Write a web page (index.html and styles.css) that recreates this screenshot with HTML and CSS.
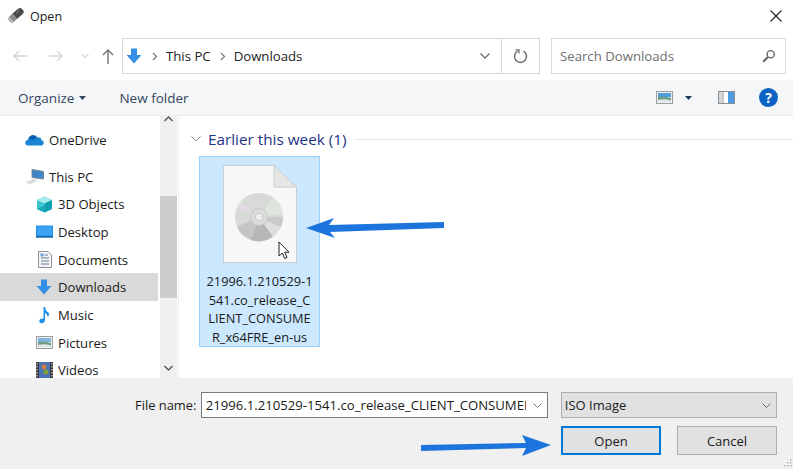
FILE: index.html
```html
<!DOCTYPE html>
<html lang="en">
<head>
<meta charset="utf-8">
<title>Open</title>
<link rel="stylesheet" href="styles.css">
</head>
<body>
<div class="dialog">
  <header class="titlebar">
    <div class="title-left">
      <svg class="app-icon" width="18" height="18" viewBox="0 0 18 18"><path d="M5.5 6.5 L11.5 1.5 Q13.5 0.5 15 2 L16.3 3.5 Q17.5 5 16 6.8 L10 12 Z" fill="#4a4a4a"/><path d="M5.5 6.5 L10 12 L6.5 15 L2 10 Z" fill="#8a8a8a"/><path d="M2 10 L6.5 15 L4.6 16.6 L0.5 12 Z" fill="#b5b5b5"/><path d="M9 6.5 L12 3.8" stroke="#8a8a8a" stroke-width="1"/></svg>
      <span>Open</span>
    </div>
    <svg class="close" width="14" height="14" viewBox="0 0 14 14"><path d="M1.5 1.5 L12.5 12.5 M12.5 1.5 L1.5 12.5" stroke="#222" stroke-width="1.1"/></svg>
  </header>

  <nav class="navbar">
    <div class="nav-buttons">
      <svg width="14" height="12" viewBox="0 0 14 12"><path d="M1 6 H14 M6 1 L1 6 L6 11" fill="none" stroke="#d6d6d6" stroke-width="1.4"/></svg>
      <svg width="14" height="12" viewBox="0 0 14 12"><path d="M0 6 H13 M8 1 L13 6 L8 11" fill="none" stroke="#d6d6d6" stroke-width="1.4"/></svg>
      <svg width="8" height="6" viewBox="0 0 8 6"><path d="M0.5 1 L4 4.5 L7.5 1" fill="none" stroke="#d6d6d6" stroke-width="1.2"/></svg>
      <svg width="12" height="15" viewBox="0 0 12 15"><path d="M6 15 V1 M1 6 L6 1 L11 6" fill="none" stroke="#757575" stroke-width="1.4"/></svg>
    </div>
    <div class="address">
      <svg class="addr-arrow" width="16" height="16" viewBox="0 0 16 16"><path d="M5 0.5 H11 V7 H15.5 L8 15.5 L0.5 7 H5 Z" fill="#3390e4"/></svg>
      <svg class="crumb-sep" width="6" height="9" viewBox="0 0 6 9"><path d="M1 1 L4.5 4.5 L1 8" fill="none" stroke="#777" stroke-width="1.2"/></svg>
      <span class="crumb">This PC</span>
      <svg class="crumb-sep" width="6" height="9" viewBox="0 0 6 9"><path d="M1 1 L4.5 4.5 L1 8" fill="none" stroke="#777" stroke-width="1.2"/></svg>
      <span class="crumb">Downloads</span>
      <svg class="addr-chevron" width="10" height="6" viewBox="0 0 10 6"><path d="M0.5 0.5 L5 5 L9.5 0.5" fill="none" stroke="#6d6d6d" stroke-width="1.3"/></svg>
      <div class="refresh">
        <svg width="15" height="15" viewBox="0 0 15 15"><path d="M4.5 2.2 A6 6 0 1 0 10.5 2.2" fill="none" stroke="#6e6e6e" stroke-width="1.5"/><path d="M2.5 0.8 H6 V4.4" fill="none" stroke="#6e6e6e" stroke-width="1.3"/></svg>
      </div>
    </div>
    <div class="search">
      <span>Search Downloads</span>
      <svg width="14" height="14" viewBox="0 0 14 14"><circle cx="8.7" cy="5.2" r="3.6" fill="none" stroke="#666" stroke-width="1.4"/><path d="M6 8 L1.2 12.8" stroke="#666" stroke-width="2"/></svg>
    </div>
  </nav>

  <div class="toolbar">
    <span class="tool">Organize<svg class="caret" width="7" height="4" viewBox="0 0 7 4"><path d="M0 0 H7 L3.5 4 Z" fill="#33475f"/></svg></span>
    <span class="tool new-folder">New folder</span>
    <div class="tool-icons">
      <svg width="17" height="13" viewBox="0 0 17 13"><rect x="0.5" y="0.5" width="16" height="12" fill="#eef0f2" stroke="#9a9d9f"/><rect x="2" y="2" width="13" height="4" fill="#4f9fd8"/><path d="M2 6 Q8 4.5 15 7 V11 H2 Z" fill="#6f9c84"/><path d="M2 9 Q8 7.5 15 9.5 V11 H2 Z" fill="#dfe8e6"/></svg>
      <svg class="view-caret" width="7" height="4" viewBox="0 0 7 4"><path d="M0 0 H7 L3.5 4 Z" fill="#1b3a63"/></svg>
      <svg class="pane" width="17" height="13" viewBox="0 0 17 13"><rect x="0.5" y="0.5" width="16" height="12" fill="#fff" stroke="#8a8f94"/><rect x="10" y="1" width="6" height="11" fill="#4a9be0"/><rect x="1" y="1" width="3" height="11" fill="#d6d8da"/><path d="M5 1 V12" stroke="#8a8f94"/></svg>
      <span class="help">?</span>
    </div>
  </div>

  <main class="content">
    <aside class="sidebar">
      <ul class="tree">
        <li class="tree-item level0 onedrive"><svg width="19" height="12" viewBox="0 0 19 12"><path d="M2.5 11.5 Q0 11 0.3 8.3 Q0.7 6 3.2 5.8 Q4.2 1.5 8 1.3 Q10.6 1.2 12.2 3.4 Q16 3 16.6 6.2 Q19 6.8 18.7 9.5 Q18.3 11.5 16.5 11.5 Z" fill="#1b86d6"/><path d="M3.2 5.8 Q4.2 1.5 8 1.3 Q10.6 1.2 12.2 3.4 Q10 4 9 6 Q6 4.5 3.2 5.8 Z" fill="#0a5fb0"/></svg><span>OneDrive</span></li>
        <li class="tree-item level0 thispc"><svg width="20" height="16" viewBox="0 0 20 16"><path d="M7 0.5 L18.5 2.5 V10 L7 8.5 Z" fill="#3d87c9" stroke="#71818f" stroke-width="0.9"/><path d="M0.5 13.5 L8 10 L13 11.5 L5 15.5 Z" fill="#d9dbdd"/></svg><span>This PC</span></li>
        <li class="tree-item level1"><svg width="17" height="17" viewBox="0 0 17 17"><path d="M8.5 0.5 L16 4 V13 L8.5 16.5 L1 13 V4 Z" fill="#3fc3cf"/><path d="M8.5 0.5 L16 4 L8.5 7.5 L1 4 Z" fill="#a6ecef"/><path d="M8.5 7.5 L16 4 V13 L8.5 16.5 Z" fill="#109fb2"/><path d="M1 13 L8.5 9.5 L8.5 16.5 Z" fill="#1aa9ba"/></svg><span>3D Objects</span></li>
        <li class="tree-item level1"><svg width="17" height="13" viewBox="0 0 17 13"><rect width="17" height="12" y="0.5" fill="#1f8fe8"/><rect x="1" y="1.5" width="15" height="9" fill="#3aa4f2"/><rect y="11" width="17" height="1.5" fill="#17659f"/></svg><span>Desktop</span></li>
        <li class="tree-item level1 docs"><svg width="14" height="17" viewBox="0 0 14 17"><path d="M0.5 0.5 H10 L13.5 4 V16.5 H0.5 Z" fill="#f4f5f6" stroke="#8d9399"/><path d="M6.5 4 H10 M3 7 H11 M3 10 H11 M3 13 H11" stroke="#6d7e90" stroke-width="1.1"/><rect x="2.5" y="2.5" width="3" height="3" fill="#5da4de"/></svg><span>Documents</span></li>
        <li class="tree-item level1 selected"><svg width="16" height="16" viewBox="0 0 16 16"><path d="M5 0.5 H11 V7 H15.5 L8 15.5 L0.5 7 H5 Z" fill="#3390e4"/></svg><span>Downloads</span></li>
        <li class="tree-item level1 music"><svg width="11" height="18" viewBox="0 0 11 18"><path d="M4.5 1 H6 Q6.5 5 10 7 Q10.5 9.5 9 11 Q8 7.5 6 7 V14 Q5.5 17.5 2.2 17.3 Q0 17 0.3 14.8 Q0.8 12.4 4.5 12.6 Z" fill="#1f8ee6"/></svg><span>Music</span></li>
        <li class="tree-item level1"><svg width="17" height="13" viewBox="0 0 17 13"><rect x="0.5" y="0.5" width="16" height="12" fill="#eef0f2" stroke="#9a9d9f"/><rect x="2" y="2" width="13" height="4" fill="#7fb6e0"/><path d="M2 6 Q8 4.5 15 7 V11 H2 Z" fill="#6f9c84"/><path d="M2 9 Q8 7.5 15 9.5 V11 H2 Z" fill="#dfe8e6"/></svg><span>Pictures</span></li>
        <li class="tree-item level1"><svg width="17" height="17" viewBox="0 0 17 17"><rect width="17" height="17" fill="#3a3a3a"/><rect x="3" y="0" width="11" height="17" fill="#4a74b5"/><circle cx="8" cy="5" r="2.4" fill="#d6803a"/><circle cx="10" cy="10" r="2.6" fill="#7ea03a"/><path d="M1 1 V16 M16 1 V16" stroke="#cfcfcf" stroke-width="1.2" stroke-dasharray="1.5 1.5"/></svg><span>Videos</span></li>
      </ul>
      <div class="scrollbar">
        <svg class="sb-up" width="9" height="6" viewBox="0 0 9 6"><path d="M0.5 5 L4.5 1 L8.5 5" fill="none" stroke="#555" stroke-width="1.3"/></svg>
        <div class="sb-thumb"></div>
        <svg class="sb-down" width="9" height="6" viewBox="0 0 9 6"><path d="M0.5 1 L4.5 5 L8.5 1" fill="none" stroke="#555" stroke-width="1.3"/></svg>
      </div>
    </aside>
    <section class="files">
      <div class="group-head">
        <svg width="10" height="6" viewBox="0 0 10 6"><path d="M0.5 0.5 L5 5 L9.5 0.5" fill="none" stroke="#8a8a8a" stroke-width="1"/></svg>
        <span class="group-title">Earlier this week (1)</span>
        <span class="group-line"></span>
      </div>
      <div class="file-tile">
        <svg class="file-icon" width="74" height="98" viewBox="0 0 74 98">
          <path d="M0.5 0.5 H51 L73.5 22 V97.5 H0.5 Z" fill="#f7f7f7" stroke="#c6cdd3"/>
          <path d="M51 0.5 V22 H73.5 Z" fill="#e6e6e4" stroke="#c6cdd3"/>
          <circle cx="36" cy="52" r="24" fill="#d7dad7"/>
          <path d="M36 52 L14 62 A24 24 0 0 0 28 75 Z" fill="#c4c6c4"/>
          <path d="M36 52 L28 75 A24 24 0 0 0 50 71.5 Z" fill="#b5b7b5"/>
          <path d="M36 52 L50 71.5 A24 24 0 0 0 58 62 Z" fill="#dcdedc"/>
          <path d="M36 52 L58 62 A24 24 0 0 0 60 52 Z" fill="#c8cac8"/>
          <path d="M36 52 L60 49 A24 24 0 0 0 50 32.5 Z" fill="#dfe4de"/>
          <path d="M36 52 L15 43 A24 24 0 0 1 18 37 Z" fill="#e4dae3"/>
          <circle cx="36" cy="52" r="8.5" fill="#dadcda" stroke="#c2c4c2" stroke-width="0.8"/>
          <circle cx="36" cy="52" r="3.6" fill="#eef0ee" stroke="#c2c4c2" stroke-width="0.8"/>
        </svg>
        <div class="file-name">21996.1.210529-1<br>541.co_release_C<br>LIENT_CONSUME<br>R_x64FRE_en-us</div>
      </div>
    </section>
  </main>

  <footer class="footer">
    <div class="footer-row">
      <label class="fn-label">File name:</label>
      <div class="fn-input"><span class="fn-text">21996.1.210529-1541.co_release_CLIENT_CONSUMER_x64FRE_en-us</span><svg width="9" height="5" viewBox="0 0 9 5"><path d="M0.5 0.5 L4.5 4.5 L8.5 0.5" fill="none" stroke="#777" stroke-width="1"/></svg></div>
      <div class="type-select"><span>ISO Image</span><svg width="9" height="5" viewBox="0 0 9 5"><path d="M0.5 0.5 L4.5 4.5 L8.5 0.5" fill="none" stroke="#666" stroke-width="1"/></svg></div>
    </div>
    <div class="footer-buttons">
      <button class="btn primary">Open</button>
      <button class="btn">Cancel</button>
    </div>
  </footer>

  <svg class="pointer pointer-file" width="140" height="24" viewBox="0 0 140 24"><path d="M1 13 L29 3 L24 10 L139 7 V13 L25 17 L30 23 Z" fill="#1c74dc"/></svg>
  <svg class="pointer pointer-open" width="132" height="26" viewBox="0 0 132 26"><path d="M0 13 L105 11 L101 3 L130 13 L101 24 L105 16 L0 19 Z" fill="#1c74dc"/></svg>
  <svg class="cursor" width="13" height="19" viewBox="0 0 13 19"><path d="M1 1 V15 L4.3 12 L6.7 17.5 L9 16.5 L6.7 11.2 H11 Z" fill="#fff" stroke="#222" stroke-width="1"/></svg>
  <svg class="grip" width="10" height="10" viewBox="0 0 10 10"><path d="M8 1 h1.5 v1.5 h-1.5 Z M5 4 h1.5 v1.5 h-1.5 Z M8 4 h1.5 v1.5 h-1.5 Z M2 7 h1.5 v1.5 h-1.5 Z M5 7 h1.5 v1.5 h-1.5 Z M8 7 h1.5 v1.5 h-1.5 Z" fill="#b5b5b5"/></svg>
</div>
</body>
</html>
```
FILE: styles.css
```css
* { box-sizing: border-box; }
html, body { margin: 0; padding: 0; }
body { width: 793px; height: 469px; overflow: hidden; background: #fff; font-family: "Open Sans", "Noto Sans", sans-serif; font-size: 13px; color: #1a1a1a; }
svg { display: block; flex: none; }
.dialog { position: relative; width: 793px; height: 469px; display: flex; flex-direction: column; }

.titlebar { height: 38px; flex: none; display: flex; align-items: center; justify-content: space-between; padding: 0 8px 6px 7px; }
.title-left { display: flex; align-items: center; gap: 5px; font-size: 12.5px; }
.close { margin-right: 2px; }

.navbar { height: 42px; flex: none; display: flex; align-items: flex-start; padding-left: 13px; }
.nav-buttons { width: 109px; height: 36px; display: flex; align-items: center; }
.nav-buttons svg:nth-child(2) { margin-left: 22px; }
.nav-buttons svg:nth-child(3) { margin-left: 18px; }
.nav-buttons svg:nth-child(4) { margin-left: 13px; }
.address { width: 418px; height: 36px; border: 1px solid #d9d9d9; display: flex; align-items: center; padding-left: 3px; }
.crumb-sep { margin-left: 10px; }
.crumb { margin-left: 8px; font-size: 13.2px; color: #222; }
.crumb + .crumb-sep { margin-left: 9px; }
.addr-chevron { margin-left: auto; margin-right: 11px; }
.refresh { width: 38px; height: 34px; border-left: 1px solid #d9d9d9; display: flex; align-items: center; justify-content: center; }
.search { margin-left: 11px; width: 235px; height: 36px; border: 1px solid #d9d9d9; display: flex; align-items: center; justify-content: space-between; padding: 0 9px 0 8px; color: #6f6f6f; font-size: 13.2px; }

.toolbar { height: 36px; flex: none; background: #f5f6f7; display: flex; align-items: center; padding: 0 15px 0 18px; border-bottom: 1px solid #ededed; color: #33475f; }
.tool { display: flex; align-items: center; gap: 5px; font-size: 13.5px; }
.new-folder { margin-left: 33px; }
.tool-icons { margin-left: auto; display: flex; align-items: center; }
.view-caret { margin-left: 12px; }
.pane { margin-left: 26px; }
.help { margin-left: 24px; width: 19px; height: 19px; border-radius: 50%; background: #0c63c4; color: #fff; font-weight: 700; font-size: 14px; line-height: 19px; text-align: center; }

.content { flex: 1; min-height: 0; display: flex; }
.sidebar { width: 179px; flex: none; display: flex; border-right: 1px solid #eeeeee; }
.tree { list-style: none; margin: 0; padding: 10px 0 0; width: 158px; height: 100%; overflow: hidden; }
.tree-item { height: 27.7px; display: grid; align-items: center; justify-items: start; font-size: 13.1px; white-space: nowrap; }
.level0 { padding-left: 25px; grid-template-columns: 24px 1fr; }
.level1 { padding-left: 36px; grid-template-columns: 22px 1fr; }
.docs svg { margin-left: 2px; }
.music svg { margin-left: 3px; }
.onedrive { margin-bottom: 9px; }
.selected { background: #d9d9d9; }
.scrollbar { width: 17px; margin-left: 2px; background: #f0f0f0; display: flex; flex-direction: column; align-items: center; height: 100%; }
.sb-thumb { width: 17px; height: 102px; margin-top: 74px; background: #cdcdcd; }
.sb-down { margin-top: auto; margin-bottom: 7px; }

.files { flex: 1; padding: 13px 0 0 12px; }
.group-head { display: flex; align-items: center; height: 20px; }
.group-title { margin-left: 7px; color: #1e3287; font-size: 15.3px; }
.group-line { flex: 1; height: 1px; background: #e6e6e6; margin-left: 8px; }
.file-tile { margin-top: 7px; margin-left: 8px; width: 121px; height: 191px; background: #cce8ff; border: 1px solid #99d1ff; display: flex; flex-direction: column; align-items: center; padding-top: 8px; }
.file-name { margin-top: 9px; font-size: 12.8px; line-height: 18.7px; text-align: center; color: #1a1a1a; white-space: nowrap; }

.footer { height: 91px; flex: none; background: #f0f0f0; padding: 14px 16px 0 0; }
.footer-row { display: flex; align-items: center; height: 26px; }
.fn-label { margin-left: 135px; width: 66px; font-size: 12.9px; white-space: nowrap; }
.fn-input { width: 347px; height: 26px; background: #fff; border: 1px solid #7a7a7a; display: flex; align-items: center; padding: 0 5px 0 4px; }
.fn-text { flex: 1; min-width: 0; overflow: hidden; white-space: nowrap; font-size: 13.15px; margin-right: 7px; }
.type-select { margin-left: 13px; width: 217px; height: 26px; background: #e1e1e1; border: 1px solid #adadad; display: flex; align-items: center; justify-content: space-between; padding: 0 5px 0 3px; font-size: 13px; }
.footer-buttons { display: flex; justify-content: flex-end; gap: 16px; margin-top: 8px; }
.btn { width: 100px; height: 29px; font-family: inherit; font-size: 13px; color: #1a1a1a; background: #e1e1e1; border: 1px solid #adadad; padding: 0; }
.primary { border: 2px solid #0078d7; }

.pointer { position: absolute; }
.pointer-file { left: 305px; top: 215px; }
.pointer-open { left: 421px; top: 432px; }
.cursor { position: absolute; left: 278px; top: 241px; }
.grip { position: absolute; right: 1px; bottom: 1px; }
```
